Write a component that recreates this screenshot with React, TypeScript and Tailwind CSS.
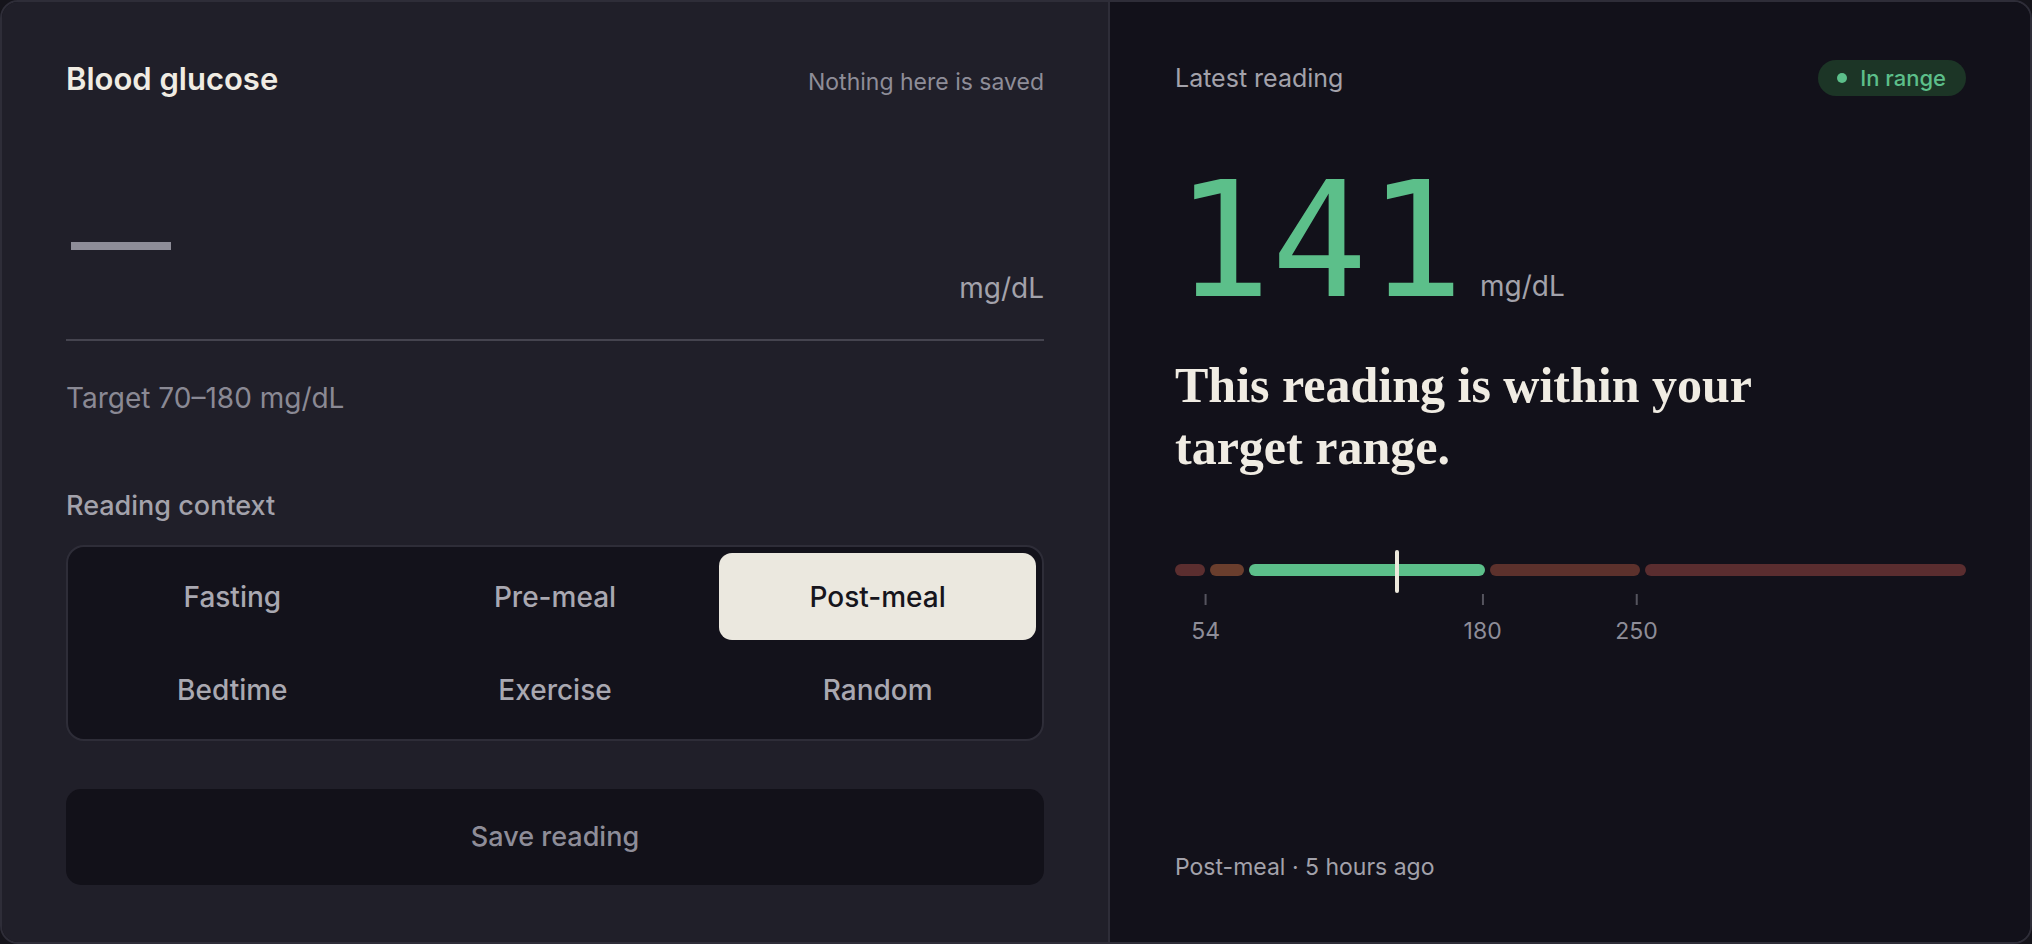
import React from "react";

const SCALE_MIN = 40;
const SCALE_MAX = 400;

const segments = [
  { from: 40, to: 54, color: "bg-[#5b2e2f]" },
  { from: 54, to: 70, color: "bg-[#6a3e2d]" },
  { from: 70, to: 180, color: "bg-[#5cbf8a]" },
  { from: 180, to: 250, color: "bg-[#5c312c]" },
  { from: 250, to: 400, color: "bg-[#5a2d2f]" },
];

const ticks = [54, 180, 250];
const reading = 141;

const contexts = ["Fasting", "Pre-meal", "Post-meal", "Bedtime", "Exercise", "Random"];

const pct = (v: number) => ((v - SCALE_MIN) / (SCALE_MAX - SCALE_MIN)) * 100;

function RangeBar() {
  return (
    <div className="relative mt-[86px] h-[80px]">
      <div className="flex h-[12px] gap-[5px]">
        {segments.map((s) => (
          <div key={s.from} className={`h-full rounded-full ${s.color}`} style={{ flexGrow: s.to - s.from, flexBasis: 0 }} />
        ))}
      </div>
      {/* current reading marker */}
      <div
        className="absolute top-[-14px] h-[43px] w-[4px] -translate-x-1/2 rounded-full bg-[#ece8dc]"
        style={{ left: `${pct(reading)}%` }}
      />
      {ticks.map((t) => (
        <div key={t} className="absolute top-[30px] flex -translate-x-1/2 flex-col items-center" style={{ left: `${pct(t)}%` }}>
          <div className="h-[11px] w-[2px] bg-[#55545e]" />
          <span className="mt-[13px] text-[23px] leading-[26px] text-[#8e8d98]">{t}</span>
        </div>
      ))}
    </div>
  );
}

export default function App() {
  return (
    <div className="h-screen w-full bg-[#15141b] font-['Inter',sans-serif]">
      <div className="flex h-full overflow-hidden rounded-[18px] border-2 border-[#2e2d38]">
        {/* entry side */}
        <div className="flex w-[1108px] shrink-0 flex-col border-r-2 border-[#2e2d38] bg-[#201f29] px-[64px] pt-[59px]">
          <div className="flex h-[36px] items-baseline justify-between">
            <h1 className="text-[31px] leading-[36px] font-semibold text-[#f0ece3]">Blood glucose</h1>
            <span className="text-[23px] text-[#8e8d98]">Nothing here is saved</span>
          </div>

          <div className="flex h-[244px] justify-between border-b-2 border-[#45444f] pt-[94px] pb-[35px]">
            <span className="ml-[5px] self-start text-[100px] leading-[100px] text-[#8e8d98]">—</span>
            <span className="self-end text-[28px] leading-[32px] text-[#a3a2ab]">mg/dL</span>
          </div>

          <p className="mt-[41px] text-[28px] leading-[32px] text-[#8a8994]">Target 70–180 mg/dL</p>

          <p className="mt-[76px] text-[27px] leading-[32px] font-medium text-[#a3a2ab]">Reading context</p>

          <div className="mt-[23px] grid grid-cols-3 gap-[6px] rounded-[18px] border-2 border-[#2e2d38] bg-[#13121b] p-[6px]">
            {contexts.map((c) => (
              <button
                key={c}
                className={
                  c === "Post-meal"
                    ? "h-[87px] rounded-[13px] bg-[#ebe8df] text-[28px] font-medium text-[#16151c]"
                    : "h-[87px] rounded-[13px] text-[28px] font-medium text-[#a9a8b1]"
                }
              >
                {c}
              </button>
            ))}
          </div>

          <button className="mt-[48px] h-[96px] w-full rounded-[15px] bg-[#121119] text-[27px] font-medium text-[#8e8d98]">
            Save reading
          </button>
        </div>

        {/* latest reading side */}
        <div className="flex flex-1 flex-col bg-[#12111a] pr-[64px] pl-[65px] pt-[58px] pb-[60px]">
          <div className="flex h-[36px] items-center justify-between">
            <span className="text-[25px] leading-[32px] text-[#a3a2ab]">Latest reading</span>
            <span className="flex h-[36px] items-center gap-[13px] rounded-full bg-[#1c3526] pr-[20px] pl-[19px] text-[22px] font-medium text-[#5cbf8a]">
              <span className="h-[10px] w-[10px] rounded-full bg-[#5cbf8a]" />
              In range
            </span>
          </div>

          <div className="mt-[65px] flex items-baseline">
            <span className="font-['DejaVu_Sans_Mono',monospace] text-[160px] leading-none text-[#5cbf8a]">{reading}</span>
            <span className="ml-[16px] text-[28px] text-[#a3a2ab]">mg/dL</span>
          </div>

          <p className="mt-[33px] max-w-[620px] font-['Liberation_Serif',serif] text-[50px] leading-[62px] font-bold text-[#f0ece3]">
            This reading is within your target range.
          </p>

          <RangeBar />

          <p className="mt-auto text-[23px] leading-[30px] text-[#a3a2ab]">Post-meal · 5 hours ago</p>
        </div>
      </div>
    </div>
  );
}
